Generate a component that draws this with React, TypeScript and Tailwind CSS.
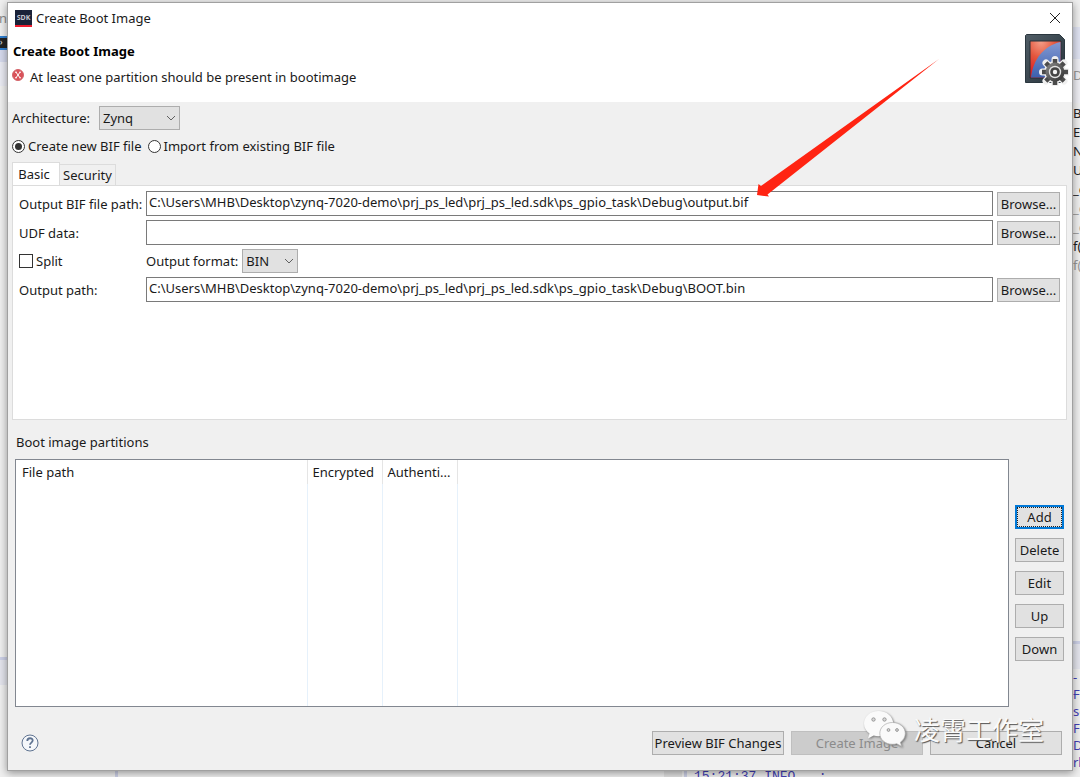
import { useState } from "react";

const fieldClass =
  "h-[25px] w-full min-w-0 border border-[#7a7a7a] bg-white px-[2px] pb-1 text-[13px] leading-4 outline-none";
const buttonClass =
  "h-6 shrink-0 border border-[#adadad] bg-[#e1e1e1] text-center text-[13px] leading-4 whitespace-nowrap";

const codeLines = [
  { text: "B", className: "text-[#222]" },
  { text: "E", className: "text-[#222]" },
  { text: "NF", className: "text-[#222]" },
  { text: "U", className: "text-[#222]" },
  { text: "_c", className: "text-[#222]" },
  { text: "_c", className: "text-[#999]" },
  { text: "_c", className: "text-[#999]" },
  { text: "f(", className: "text-[#222]" },
  { text: "f(", className: "text-[#999]" },
];
const logLines = ["--", "Fo", "sc", "Fo", "De", "rk"];

function BrowseButton({ label }: { label: string }) {
  return (
    <button type="button" aria-label={label} className={`${buttonClass} w-[63px]`}>
      Browse...
    </button>
  );
}

function Dropdown({ id, options, className }: { id: string; options: string[]; className: string }) {
  return (
    <div className={`relative h-6 ${className}`}>
      <select
        id={id}
        className="h-6 w-full appearance-none border border-[#adadad] bg-[#e1e1e1] pl-[3px] text-[13px] leading-4"
      >
        {options.map((option) => (
          <option key={option}>{option}</option>
        ))}
      </select>
      <svg
        viewBox="0 0 10 6"
        className="pointer-events-none absolute top-[9px] right-1 h-1.5 w-2.5"
        fill="none"
        stroke="#606060"
      >
        <path d="M1 1l4 4 4-4" />
      </svg>
    </div>
  );
}

function Radio({ label, checked, onChange }: { label: string; checked: boolean; onChange: () => void }) {
  return (
    <label className="flex items-center gap-[3px]">
      <input
        type="radio"
        name="bif-source"
        checked={checked}
        onChange={onChange}
        className="grid size-[13px] appearance-none place-items-center rounded-full border border-[#333] bg-white before:size-[7px] before:rounded-full checked:before:bg-[#333]"
      />
      {label}
    </label>
  );
}

function SdkIcon() {
  return (
    <svg viewBox="0 0 17 17" className="size-[17px]">
      <path fill="#1a2238" d="M0 0h17v17H0z" />
      <path fill="#ee1c2e" d="M0 15h17v2H0z" />
      <text x="8.5" y="10" fontSize="7" fontWeight="bold" textAnchor="middle" fill="#c4c7d0">
        SDK
      </text>
    </svg>
  );
}

function ErrorIcon() {
  return (
    <svg viewBox="0 0 12 12" className="mb-1 size-3">
      <circle cx="6" cy="6" r="5.5" fill="#d9525a" stroke="#d3656b" />
      <path d="M4 3.2l4 5.6M8 3.2L4 8.8M3 3.2h2M7.2 3.2H9M3 8.8h2M7.2 8.8H9" stroke="#fff" />
    </svg>
  );
}

function BootImageIcon() {
  return (
    <svg viewBox="0 0 44 52" className="mt-[1px] h-[52px] w-11">
      <defs>
        <linearGradient id="card" x1="0" y1="0" x2="1" y2="1">
          <stop offset="0" stopColor="#505d66" />
          <stop offset="1" stopColor="#26323a" />
        </linearGradient>
        <radialGradient id="red" cx="0.35" cy="0" r="0.9">
          <stop offset="0" stopColor="#f5a08a" />
          <stop offset="0.5" stopColor="#e4573e" />
          <stop offset="1" stopColor="#dd1f22" />
        </radialGradient>
        <linearGradient id="blue" x1="0.5" y1="0" x2="0.5" y2="1">
          <stop offset="0" stopColor="#8299d2" />
          <stop offset="1" stopColor="#3c60ae" />
        </linearGradient>
        <linearGradient id="gear" x1="0" y1="0" x2="1" y2="1">
          <stop offset="0" stopColor="#8b8b8b" />
          <stop offset="1" stopColor="#2d2d2d" />
        </linearGradient>
      </defs>
      <path d="M1.5.5h33l5 5v43h-39V1.500z" fill="url(#card)" stroke="#2b373f" />
      <path d="M5 7h31v37H5z" fill="url(#red)" stroke="#263038" />
      <path d="M35.500 8v35.500H6C8 26 18 12 35.500 8z" fill="url(#blue)" />
      <g transform="translate(30 38)">
        <path
          d="M0-12.500v25M-12.500 0h25M-9-9L9 9M9-9L-9 9"
          stroke="#f0f0f0"
          strokeWidth="7"
          strokeLinecap="round"
        />
        <circle r="11" fill="#f0f0f0" />
        <path d="M0-13v26M-13 0h26M-9.200-9.200l18.400 18.400M9.200-9.200L-9.200 9.200" stroke="#4b4b4b" strokeWidth="4.500" />
        <circle r="9.500" fill="url(#gear)" />
        <circle r="6.200" fill="#e4e4e4" />
        <circle r="4.800" fill="#444" />
        <circle r="2.200" fill="#f2f2f2" />
      </g>
    </svg>
  );
}

function Watermark() {
  return (
    <div className="pointer-events-none absolute right-7 bottom-[22px] flex items-center gap-[7px]">
      <svg viewBox="0 0 44 38" className="h-[38px] w-11 drop-shadow-[1px_1px_1px_#777]">
        <path
          fill="#fafafa"
          d="M15.500 1C7.300 1 1 6.500 1 13.600c0 4 2.100 7.500 5.500 9.900L5 28.500l5.700-2.900c1.600.4 3 .6 4.800.6 8.200 0 14.700-5.500 14.700-12.600S23.700 1 15.500 1z"
        />
        <path
          fill="#fafafa"
          stroke="#aaa"
          strokeWidth="0.7"
          d="M29.500 12.500c-7.200 0-12.700 4.800-12.700 10.900S22.300 34.300 29.500 34.300c1.500 0 2.900-.2 4.200-.6l5 2.800-1.300-4.300c3-2.100 4.900-5.200 4.900-8.800 0-6.100-5.600-10.900-12.800-10.900z"
        />
        <g fill="#d8d8d8" stroke="#888" strokeWidth="0.800">
          <circle cx="10.500" cy="9.500" r="1.700" />
          <circle cx="21.500" cy="9.500" r="1.700" />
          <circle cx="25.500" cy="20" r="1.400" />
          <circle cx="34" cy="20" r="1.400" />
        </g>
      </svg>
      <span className="font-['Noto_Sans_CJK_SC',sans-serif] text-[26px] leading-[38px] text-[#fafafa] [text-shadow:1px_1px_1px_#555]">
        凌霄工作室
      </span>
    </div>
  );
}

function PathRow({ id, label, value }: { id: string; label: string; value: string }) {
  return (
    <>
      <label htmlFor={id}>{label}</label>
      <input id={id} type="text" defaultValue={value} className={fieldClass} />
      <BrowseButton label={`Browse ${label}`} />
    </>
  );
}

export default function App() {
  const [source, setSource] = useState("new");
  const [tab, setTab] = useState("basic");

  return (
    <div className="grid min-h-screen grid-cols-[7px_minmax(0,1fr)_7px] grid-rows-[minmax(0,1fr)_7px] overflow-hidden bg-[#efefef] pt-[2px] font-['Noto_Sans','Open_Sans',sans-serif] text-[13px] leading-4 text-[#1a1a1a]">
      {/* editor window behind the dialog */}
      <div className="flex flex-col overflow-hidden">
        <span className="mt-2 h-[26px] self-end text-[#888]">n</span>
        <span className="h-[14px] border-y-2 border-[#2f7fd0] bg-[#222] text-[8px] leading-2 text-white">›</span>
        <span className="h-3 bg-[#d5d9ec]" />
        <span className="h-6 bg-[#e9eaf2]" />
        <span className="mt-auto mb-[86px] h-7 border-t-[3px] border-[#ccd0e6] bg-[#e3e4ec]" />
      </div>

      <main className="relative z-10 flex flex-col border border-[#a0a0a0] bg-[#f0f0f0] shadow-[0_2px_8px_#0006]">
        <header className="bg-white pb-4">
          <div className="flex h-[30px] items-center gap-1 pr-[5px] pl-[7px]">
            <SdkIcon />
            <span className="grow">Create Boot Image</span>
            <button type="button" aria-label="Close" className="grid size-6 place-items-center">
              <svg viewBox="0 0 12 12" className="size-3" stroke="#222" fill="none">
                <path d="M1 1l10 10M11 1L1 11" />
              </svg>
            </button>
          </div>
          <div className="flex h-[53px] justify-between pr-[3px] pl-1">
            <div className="pt-2">
              <h1 className="pl-[1px] text-[13px] leading-5 font-bold text-black">Create Boot Image</h1>
              <p className="flex items-center gap-[6px] pt-[6px] leading-5">
                <ErrorIcon />
                At least one partition should be present in bootimage
              </p>
            </div>
            <BootImageIcon />
          </div>
        </header>

        <div className="flex items-center gap-[9px] pt-1 pl-1">
          <label htmlFor="architecture">Architecture:</label>
          <Dropdown id="architecture" options={["Zynq", "Zynq MP"]} className="w-[81px]" />
        </div>
        <div className="flex h-8 items-center gap-[6px] pl-1">
          <Radio label="Create new BIF file" checked={source === "new"} onChange={() => setSource("new")} />
          <Radio
            label="Import from existing BIF file"
            checked={source === "import"}
            onChange={() => setSource("import")}
          />
        </div>

        <div className="flex items-end px-1" role="tablist">
          <button
            type="button"
            role="tab"
            aria-selected={tab === "basic"}
            onClick={() => setTab("basic")}
            className="h-[23px] w-12 border border-b-0 border-[#dcdcdc] bg-white pr-1"
          >
            Basic
          </button>
          <button
            type="button"
            role="tab"
            aria-selected={tab === "security"}
            onClick={() => setTab("security")}
            className="h-[21px] w-14 border border-b-0 border-l-0 border-[#dcdcdc]"
          >
            Security
          </button>
        </div>
        <section className="mr-[5px] ml-1 h-[235px] border border-[#dcdcdc] bg-white px-[6px] pt-[5px]">
          <div className="grid grid-cols-[123px_minmax(0,1fr)_63px] items-center gap-x-1 gap-y-1 whitespace-nowrap">
            <PathRow
              id="bif-path"
              label="Output BIF file path:"
              value="C:\Users\MHB\Desktop\zynq-7020-demo\prj_ps_led\prj_ps_led.sdk\ps_gpio_task\Debug\output.bif"
            />
            <PathRow id="udf-data" label="UDF data:" value="" />
            <label className="flex items-center gap-[3px]">
              <input
                type="checkbox"
                className="size-[14px] appearance-none border border-[#333] bg-white checked:bg-[#333]"
              />
              Split
            </label>
            <div className="col-span-2 flex items-center gap-1">
              <label htmlFor="format">Output format:</label>
              <Dropdown id="format" options={["BIN", "MCS"]} className="w-14" />
            </div>
            <PathRow
              id="output-path"
              label="Output path:"
              value="C:\Users\MHB\Desktop\zynq-7020-demo\prj_ps_led\prj_ps_led.sdk\ps_gpio_task\Debug\BOOT.bin"
            />
          </div>
        </section>

        <h2 className="px-2 pt-[14px] pb-[9px]">Boot image partitions</h2>
        <div className="flex min-h-[248px] flex-1 gap-[6px] pr-2 pl-[7px]">
          <div className="flex min-w-0 flex-1 border border-[#828790] bg-white">
            <table className="w-full table-fixed border-collapse text-left">
              <thead>
                <tr className="h-6">
                  <th className="w-[291px] border-r border-[#e5e5e5] px-[6px] font-normal">File path</th>
                  <th className="w-[75px] border-r border-[#e5e5e5] px-[5px] font-normal">Encrypted</th>
                  <th className="w-[75px] border-r border-[#e5e5e5] px-[5px] font-normal">Authenti...</th>
                  <th />
                </tr>
              </thead>
              <tbody>
                <tr>
                  <td className="border-r border-[#e6f1fb]" />
                  <td className="border-r border-[#e6f1fb]" />
                  <td className="border-r border-[#e6f1fb]" />
                  <td />
                </tr>
              </tbody>
            </table>
          </div>
          <div className="flex w-[49px] flex-col justify-center gap-[9px]">
            <button
              type="button"
              className="h-6 border-2 border-[#0078d7] bg-[#e1e1e1] outline-1 -outline-offset-3 outline-dotted outline-[#222]"
            >
              Add
            </button>
            {["Delete", "Edit", "Up", "Down"].map((name) => (
              <button key={name} type="button" className={buttonClass}>
                {name}
              </button>
            ))}
          </div>
        </div>

        <footer className="flex h-[63px] items-center gap-[7px] pt-2 pr-[10px] pl-[13px]">
          <button type="button" aria-label="Help" className="mr-auto">
            <svg viewBox="0 0 18 18" className="size-[18px]" fill="none" stroke="#5f7391">
              <circle cx="9" cy="9" r="8" fill="#f5f7fa" />
              <path d="M6.300 7c0-3.600 5.400-3.600 5.400-.4 0 1.900-2.700 2.100-2.700 4.200M9 12.300v1.700" strokeWidth="1.800" />
            </svg>
          </button>
          <button type="button" className={`${buttonClass} w-[132px]`}>
            Preview BIF Changes
          </button>
          <button type="button" disabled className="h-6 w-[132px] border border-[#bfbfbf] bg-[#ccc] text-[#8b8b8b]">
            Create Image
          </button>
          <button type="button" className={`${buttonClass} w-[132px]`}>
            Cancel
          </button>
        </footer>

        {/* callout pointing at the output file */}
        <svg
          viewBox="0 0 184 140"
          className="pointer-events-none absolute top-[55px] right-[132px] h-[140px] w-[184px]"
        >
          <path fill="#ff2412" d="M183 1L11.500 136.500l1.500 2-12-1.500 1.500-11 2.500 2z" />
        </svg>
        <Watermark />
      </main>

      <div className="flex flex-col overflow-hidden">
        <span className="mt-[25px] h-8 bg-[#dfe2f1]" />
        <span className="h-11 bg-[#eeeef3] pt-2 text-[#999]">D</span>
        {codeLines.map((line, index) => (
          <span key={index} className={`h-[19px] shrink-0 leading-5 ${line.className}`}>
            {line.text}
          </span>
        ))}
        <span className="mt-auto h-7 border-t-[3px] border-[#ccd0e6] bg-[#e3e4ec]" />
        {logLines.map((line, index) => (
          <span key={index} className="h-[17px] shrink-0 text-[#4340b5]">
            {line}
          </span>
        ))}
      </div>
      <div className="col-span-3 flex h-[7px] overflow-hidden">
        <span className="w-[115px]" />
        <span className="w-[3px] bg-[#ccd0e6]" />
        <span className="w-[546px]" />
        <span className="w-[18px] bg-[#e0e0e0]" />
        <span className="ml-[2px] w-[3px] bg-[#ccd0e6]" />
        <span className="pl-[7px] font-['Liberation_Mono',monospace] leading-3 whitespace-pre text-[#4340b5]">
          {"15:21:37 INFO   :"}
        </span>
      </div>
    </div>
  );
}
